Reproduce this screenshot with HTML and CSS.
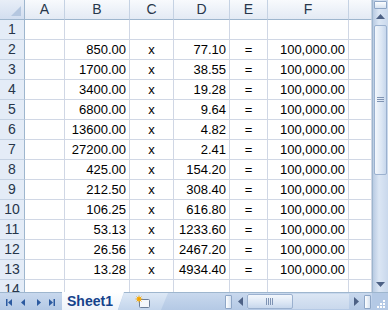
FILE: index.html
```html
<!DOCTYPE html>
<html lang="en">
<head>
  <meta charset="UTF-8" />
  <title>Sheet1</title>
  <link rel="stylesheet" href="styles.css">
</head>
<body>
  <div class="window">
    <div class="main">
      <div class="sheet">
        <div class="row head">
          <div class="corner"></div>
          <div class="col">A</div><div class="col">B</div><div class="col">C</div><div class="col">D</div>
          <div class="col">E</div><div class="col">F</div><div class="col"></div>
        </div>
        <div class="row"><div class="num">1</div><div></div><div></div><div></div><div></div><div></div><div></div><div></div></div>
        <div class="row"><div class="num">2</div><div></div><div class="r">850.00</div><div class="c">x</div><div class="r">77.10</div><div class="c">=</div><div class="r">100,000.00</div><div></div></div>
        <div class="row"><div class="num">3</div><div></div><div class="r">1700.00</div><div class="c">x</div><div class="r">38.55</div><div class="c">=</div><div class="r">100,000.00</div><div></div></div>
        <div class="row"><div class="num">4</div><div></div><div class="r">3400.00</div><div class="c">x</div><div class="r">19.28</div><div class="c">=</div><div class="r">100,000.00</div><div></div></div>
        <div class="row"><div class="num">5</div><div></div><div class="r">6800.00</div><div class="c">x</div><div class="r">9.64</div><div class="c">=</div><div class="r">100,000.00</div><div></div></div>
        <div class="row"><div class="num">6</div><div></div><div class="r">13600.00</div><div class="c">x</div><div class="r">4.82</div><div class="c">=</div><div class="r">100,000.00</div><div></div></div>
        <div class="row"><div class="num">7</div><div></div><div class="r">27200.00</div><div class="c">x</div><div class="r">2.41</div><div class="c">=</div><div class="r">100,000.00</div><div></div></div>
        <div class="row"><div class="num">8</div><div></div><div class="r">425.00</div><div class="c">x</div><div class="r">154.20</div><div class="c">=</div><div class="r">100,000.00</div><div></div></div>
        <div class="row"><div class="num">9</div><div></div><div class="r">212.50</div><div class="c">x</div><div class="r">308.40</div><div class="c">=</div><div class="r">100,000.00</div><div></div></div>
        <div class="row"><div class="num">10</div><div></div><div class="r">106.25</div><div class="c">x</div><div class="r">616.80</div><div class="c">=</div><div class="r">100,000.00</div><div></div></div>
        <div class="row"><div class="num">11</div><div></div><div class="r">53.13</div><div class="c">x</div><div class="r">1233.60</div><div class="c">=</div><div class="r">100,000.00</div><div></div></div>
        <div class="row"><div class="num">12</div><div></div><div class="r">26.56</div><div class="c">x</div><div class="r">2467.20</div><div class="c">=</div><div class="r">100,000.00</div><div></div></div>
        <div class="row"><div class="num">13</div><div></div><div class="r">13.28</div><div class="c">x</div><div class="r">4934.40</div><div class="c">=</div><div class="r">100,000.00</div><div></div></div>
        <div class="row"><div class="num">14</div><div></div><div></div><div></div><div></div><div></div><div></div><div></div></div>
      </div>

      <div class="vscroll">
        <div class="split-v"></div>
        <div class="arrow-btn">
          <svg width="9" height="5" viewBox="0 0 9 5"><polygon points="0,5 9,5 4.5,0" fill="#4d6185"/></svg>
        </div>
        <div class="vthumb">
          <svg width="7" height="6" viewBox="0 0 7 6"><path d="M0 .5h7M0 2.5h7M0 4.5h7" stroke="#7f93b3"/></svg>
        </div>
        <div class="vtrack"></div>
        <div class="arrow-btn">
          <svg width="9" height="5" viewBox="0 0 9 5"><polygon points="0,0 9,0 4.5,5" fill="#4d6185"/></svg>
        </div>
      </div>
    </div>

    <div class="bottom">
      <div class="nav">
        <svg width="60" height="18" viewBox="0 0 60 18">
          <g fill="#2c5aa0">
            <rect x="6" y="6" width="1.5" height="7"/><polygon points="8,9.5 12,6 12,13"/>
            <polygon points="21,9.5 25,6 25,13"/>
            <polygon points="37,6 41,9.5 37,13"/>
            <polygon points="49,6 53,9.5 49,13"/><rect x="53.5" y="6" width="1.5" height="7"/>
          </g>
        </svg>
      </div>
      <div class="tabs">
        <div class="tab active">Sheet1</div>
        <div class="tab add">
          <svg width="18" height="14" viewBox="0 0 18 14">
            <rect x="5.5" y="4.5" width="10" height="8" rx="1" fill="#f4f7fb" stroke="#6d7f99"/>
            <circle cx="5" cy="4" r="2.2" fill="#f5c020"/>
            <path d="M5 0.5v7M1.5 4h7M2.5 1.5l5 5M7.5 1.5l-5 5" stroke="#f5a000" stroke-width="0.8"/>
          </svg>
        </div>
      </div>
      <div class="hscroll">
        <div class="split-h"></div>
        <div class="harrow">
          <svg width="5" height="9" viewBox="0 0 5 9"><polygon points="5,0 5,9 0,4.5" fill="#4d6185"/></svg>
        </div>
        <div class="htrack">
          <div class="hthumb">
            <svg width="8" height="7" viewBox="0 0 8 7"><path d="M.5 0v7M2.5 0v7M4.5 0v7M6.5 0v7" stroke="#7f93b3"/></svg>
          </div>
        </div>
        <div class="harrow">
          <svg width="5" height="9" viewBox="0 0 5 9"><polygon points="0,0 0,9 5,4.5" fill="#4d6185"/></svg>
        </div>
        <div class="split-h"></div>
      </div>
      <div class="grip">
        <svg width="16" height="18" viewBox="0 0 16 18">
          <g fill="#ffffff">
            <rect x="11" y="7" width="2" height="2"/>
            <rect x="8" y="10" width="2" height="2"/><rect x="11" y="10" width="2" height="2"/>
            <rect x="5" y="13" width="2" height="2"/><rect x="8" y="13" width="2" height="2"/><rect x="11" y="13" width="2" height="2"/>
          </g>
        </svg>
      </div>
    </div>
  </div>
</body>
</html>
```

FILE: styles.css
```css
* {
  margin: 0;
  padding: 0;
  box-sizing: border-box;
}

body {
  font-family: "Liberation Sans", Arial, sans-serif;
  font-size: 13px;
  color: #000;
  background: #fff;
  overflow: hidden;
}

.window {
  width: 388px;
  height: 310px;
  display: flex;
  flex-direction: column;
  overflow: hidden;
}

.main {
  display: flex;
  height: 292px;
}

.sheet {
  width: 372px;
  overflow: hidden;
}

.row {
  display: grid;
  grid-template-columns: 25px 40px 65px 44px 56px 38px 81px 23px;
  height: 20px;
}

.row > div {
  border-right: 1px solid #d0d7e5;
  border-bottom: 1px solid #d0d7e5;
  line-height: 19px;
  white-space: nowrap;
  overflow: hidden;
}

.row .r {
  text-align: right;
  padding-right: 3px;
}

.row .c {
  text-align: center;
}

.row .num {
  background: #e4ecf7;
  border-right: 1px solid #9eb6ce;
  border-bottom: 1px solid #c5d2e3;
  text-align: center;
  color: #27364a;
  font-size: 14px;
}

.head .col,
.head .corner {
  background: linear-gradient(#f8fafd, #e3eaf4);
  border-right: 1px solid #c5d2e3;
  border-bottom: 1px solid #9eb6ce;
  text-align: center;
  color: #27364a;
  font-size: 14px;
}

.head .corner {
  position: relative;
  background: linear-gradient(#e8eef7, #d2def0);
  border-right: 1px solid #9eb6ce;
}

.head .corner::after {
  content: "";
  position: absolute;
  right: 3px;
  bottom: 3px;
  width: 0;
  height: 0;
  border-left: 10px solid transparent;
  border-bottom: 10px solid #b5c7e0;
}

.vscroll {
  width: 16px;
  display: flex;
  flex-direction: column;
  background: linear-gradient(90deg, #b9cbe3, #dbe6f4 40%, #c9d8ec);
  border-left: 1px solid #9eb6ce;
}

.split-v {
  height: 8px;
  margin: 1px 1px 0;
  background: linear-gradient(#fdfeff, #d6e2f1);
  border: 1px solid #8ea6c6;
  border-radius: 1px;
}

.arrow-btn {
  height: 15px;
  display: flex;
  align-items: center;
  justify-content: center;
}

.vthumb {
  height: 150px;
  margin: 1px 1px 0;
  border: 1px solid #9bb1cf;
  border-radius: 2px;
  background: linear-gradient(90deg, #f3f7fc, #dbe6f4 60%, #c7d7ec);
  display: flex;
  align-items: center;
  justify-content: center;
}

.vtrack {
  flex: 1;
}

.bottom {
  display: flex;
  height: 18px;
  background: linear-gradient(#c8d8ed, #b4c9e5);
  border-top: 1px solid #9eb6ce;
}

.nav {
  width: 62px;
  flex: none;
}

.tabs {
  display: flex;
  width: 162px;
  flex: none;
  align-items: flex-start;
}

.tab {
  height: 17px;
  display: flex;
  align-items: center;
  justify-content: center;
}

.tab.active {
  width: 62px;
  background: linear-gradient(#ffffff, #eef3fa);
  color: #15428b;
  font-weight: bold;
  font-size: 14px;
  clip-path: polygon(0 0, 100% 0, 90% 100%, 0 100%);
  padding-right: 6px;
  margin-top: -1px;
  height: 18px;
}

.tab.add {
  width: 50px;
  margin-left: -6px;
  background: linear-gradient(#dde8f5, #c3d5ec);
  clip-path: polygon(12% 0, 100% 0, 86% 100%, 0 100%);
}

.hscroll {
  flex: 1;
  display: flex;
  align-items: center;
  padding: 1px 0;
}

.split-h {
  width: 7px;
  height: 14px;
  margin: 0 1px;
  background: linear-gradient(90deg, #fdfeff, #d6e2f1);
  border: 1px solid #8ea6c6;
  border-radius: 1px;
}

.harrow {
  width: 14px;
  height: 15px;
  display: flex;
  align-items: center;
  justify-content: center;
}

.htrack {
  flex: 1;
  height: 15px;
  background: linear-gradient(#dbe6f4, #c9d8ec);
  display: flex;
}

.hthumb {
  width: 46px;
  height: 15px;
  border: 1px solid #9bb1cf;
  border-radius: 2px;
  background: linear-gradient(#f3f7fc, #dbe6f4 60%, #c7d7ec);
  display: flex;
  align-items: center;
  justify-content: center;
}

.grip {
  width: 16px;
  flex: none;
  background: #b4c9e5;
}
```
